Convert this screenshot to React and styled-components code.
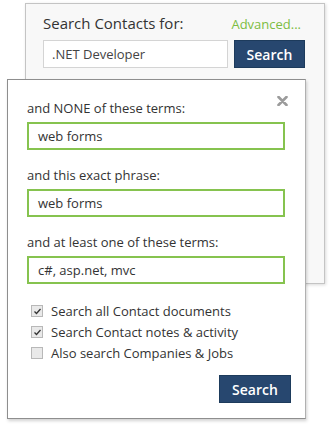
import React from "react";
import styled, { createGlobalStyle } from "styled-components";

const Global = createGlobalStyle`
  html, body { margin: 0; padding: 0; background: #fff; }
  body { font-family: "Open Sans", "Noto Sans", sans-serif; color: #333; }
  * { box-sizing: border-box; }
`;

const Stage = styled.div`
  position: relative;
  width: 332px;
  height: 428px;
  overflow: hidden;
`;

const BackPanel = styled.div`
  margin: 3px 0 0 25px;
  width: 300px;
  height: 281px;
  background: #f8f8f8;
  border: 1px solid #c4c4c4;
  box-shadow: 1px 1px 3px rgba(0,0,0,0.15);
  padding: 9px 18px 0 17px;
`;

const HeaderRow = styled.div`
  display: flex;
  justify-content: space-between;
  align-items: baseline;
  height: 20px;
  line-height: 20px;
`;

const Title = styled.span`
  font-size: 15px;
  color: #333;
`;

const AdvLink = styled.a`
  font-size: 13px;
  color: #7cbd42;
  text-decoration: none;
  margin-right: 5px;
`;

const QuickRow = styled.div`
  display: flex;
  gap: 6px;
  margin-top: 7px;
`;

const QuickInput = styled.div`
  width: 185px;
  height: 28px;
  background: #fff;
  border: 1px solid #d4d4d4;
  font-size: 13px;
  padding: 0 0 0 8px;
  display: flex;
  align-items: center;
  color: #444;
`;

const Button = styled.button`
  height: 28px;
  width: ${p => p.$w || 71}px;
  background: #27476f;
  color: #fff;
  border: 1px solid #1d3b5c;
  font-family: "Open Sans", sans-serif;
  font-size: 14px;
  font-weight: 600;
  padding: 0;
  display: flex;
  align-items: center;
  justify-content: center;
`;

const FrontPanel = styled.div`
  position: absolute;
  left: 7px;
  top: 79px;
  width: 299px;
  height: 340px;
  background: #fff;
  border: 1px solid #8e8e8e;
  border-right-color: #b0b0b0;
  box-shadow: 1px 2px 3px rgba(0,0,0,0.18);
  padding: 18px 19px 0 19px;
`;

const Close = styled.svg`
  position: absolute;
  right: 17px;
  top: 16px;
`;

const Label = styled.div`
  font-size: 13px;
  color: #333;
  height: 20px;
  line-height: 20px;
  margin-top: ${p => p.$mt || 0}px;
`;

const Field = styled.div`
  margin-top: 4px;
  height: 28px;
  width: 258px;
  border: 2px solid #86c34f;
  font-size: 13px;
  padding-left: 9px;
  display: flex;
  align-items: center;
  color: #333;
`;

const Checks = styled.div`
  margin-top: 18px;
  display: flex;
  flex-direction: column;
  gap: 3px;
  padding-left: 4px;
`;

const CheckRow = styled.div`
  display: flex;
  align-items: center;
  gap: 8px;
  height: 18px;
  font-size: 13px;
  color: #333;
`;

const Box = styled.span`
  width: 12px;
  height: 12px;
  border: 1px solid #b8b8b8;
  background: #e9e9e9;
  display: flex;
  align-items: center;
  justify-content: center;
`;

const Footer = styled.div`
  display: flex;
  justify-content: flex-end;
  margin: 13px -5px 0 0;
`;

const Check = ({ on, children }) => (
  <CheckRow>
    <Box>
      {on && (
        <svg width="9" height="9" viewBox="0 0 9 9">
          <path d="M1.5 4.5 L3.5 6.5 L7.5 2" fill="none" stroke="#333" strokeWidth="1.3" />
        </svg>
      )}
    </Box>
    <span>{children}</span>
  </CheckRow>
);

export default function App() {
  return (
    <Stage>
      <Global />
      <BackPanel>
        <HeaderRow>
          <Title>Search Contacts for:</Title>
          <AdvLink>Advanced...</AdvLink>
        </HeaderRow>
        <QuickRow>
          <QuickInput>.NET Developer</QuickInput>
          <Button $w={71}>Search</Button>
        </QuickRow>
      </BackPanel>
      <FrontPanel>
        <Close width="11" height="10" viewBox="0 0 11 10">
          <path d="M1.5 1 L9.5 9 M9.5 1 L1.5 9" stroke="#9b9b9b" strokeWidth="2.6" strokeLinecap="round" />
        </Close>
        <Label>and NONE of these terms:</Label>
        <Field>web forms</Field>
        <Label $mt={15}>and this exact phrase:</Label>
        <Field>web forms</Field>
        <Label $mt={15}>and at least one of these terms:</Label>
        <Field>c#, asp.net, mvc</Field>
        <Checks>
          <Check on>Search all Contact documents</Check>
          <Check on>Search Contact notes &amp; activity</Check>
          <Check>Also search Companies &amp; Jobs</Check>
        </Checks>
        <Footer>
          <Button $w={72}>Search</Button>
        </Footer>
      </FrontPanel>
    </Stage>
  );
}
